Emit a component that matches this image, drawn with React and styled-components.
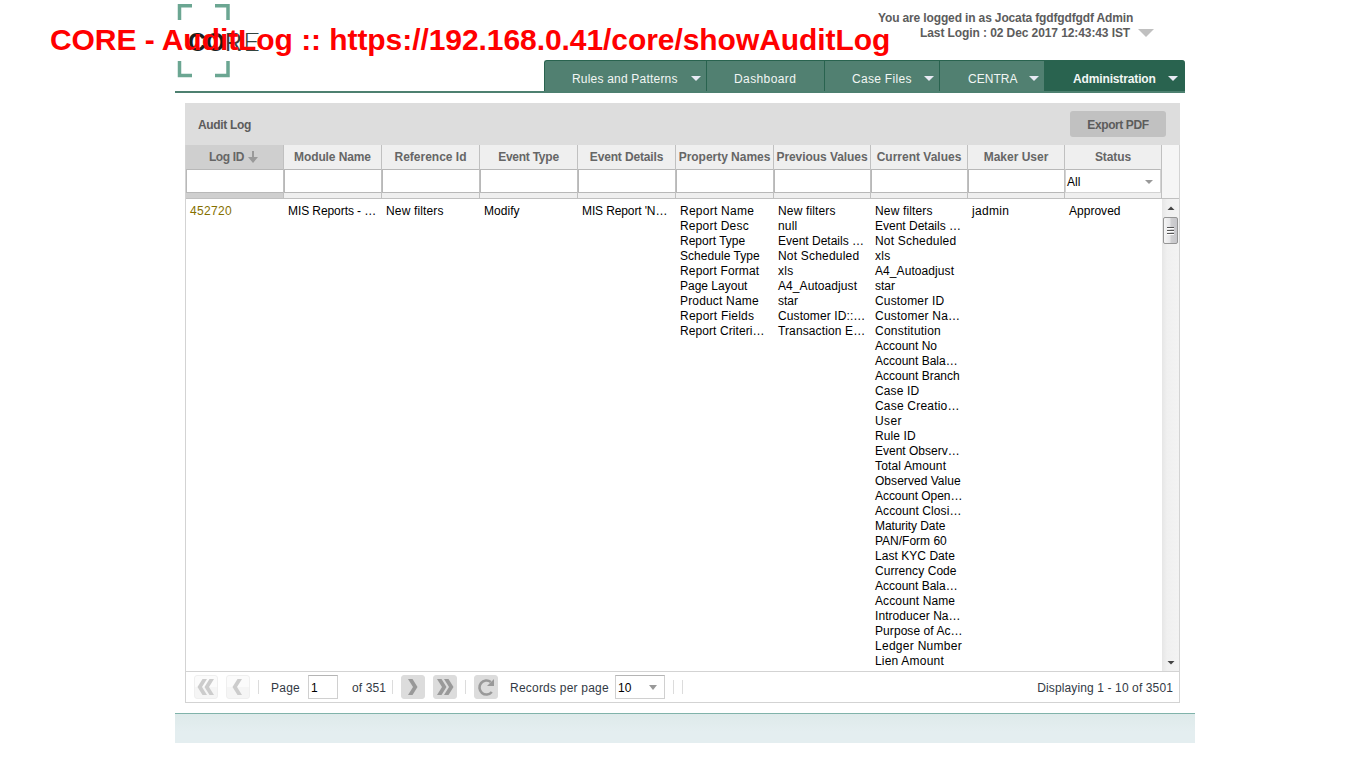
import React from "react";
import styled, { createGlobalStyle } from "styled-components";

const Global = createGlobalStyle`
  * { box-sizing: border-box; }
  html, body { margin: 0; padding: 0; background: #fff; overflow: hidden; }
  body { font: 12px/15px "Liberation Sans", Arial, sans-serif; color: #000; }
`;

const Page = styled.div`
  position: relative;
  width: 1349px;
  height: 758px;
  padding-left: 175px;
  overflow: hidden;
`;

const UrlCaption = styled.div`
  position: absolute;
  left: 50px;
  top: 22px;
  font-size: 30px;
  line-height: 35px;
  font-weight: bold;
  letter-spacing: -0.065px;
  color: #f00;
  white-space: nowrap;
`;

const Text = styled.span`
  letter-spacing: ${(p) => p.$ls || 0}px;
  white-space: pre;
`;

const Masthead = styled.header`
  display: flex;
  justify-content: space-between;
  width: 1010px;
  height: 60px;
`;

const Logo = styled.svg`
  display: block;
  width: 92px;
  height: 80px;
  flex: none;
  overflow: visible;
`;

const Login = styled.div`
  display: flex;
  flex-direction: column;
  width: 307px;
  padding-top: 11px;
  font-weight: bold;
  color: #5c5c5c;
`;

const LoginLine = styled.div`
  display: flex;
  align-items: center;
  height: 15px;
  padding-left: ${(p) => p.$indent || 0}px;
`;

const Caret = styled.i`
  width: 0;
  height: 0;
  border: ${(p) => p.$w || 5}px solid transparent;
  border-top: ${(p) => p.$h || 5}px solid ${(p) => p.$color || "#e8eaf4"};
  border-bottom: 0;
`;

const UserCaret = styled(Caret)`
  margin: 0 0 2px 8px;
`;

const NavBar = styled.nav`
  display: flex;
  justify-content: flex-end;
  width: 1010px;
  height: 33px;
  border-bottom: 2px solid #4d8070;
`;

const NavItem = styled.div`
  display: flex;
  align-items: center;
  justify-content: space-between;
  width: ${(p) => p.$w}px;
  height: 31px;
  padding: 7px ${(p) => p.$right || 5}px 0 ${(p) => p.$left}px;
  color: #f2f6f4;
  background: ${(p) => (p.$active ? "#29634f" : "#518071")};
  border-top: 1px solid #29634f;
  border-left: ${(p) => (p.$active ? 0 : "1px solid #29634f")};
  border-radius: ${(p) => p.$radius || 0};
  font-weight: ${(p) => (p.$active ? "bold" : "normal")};
`;

const NavCaret = styled(Caret)`
  margin-bottom: 2px;
`;

const Panel = styled.section`
  width: 995px;
  height: 600px;
  margin: 10px 0 0 10px;
  border: 1px solid #d3d3d3;
  border-top: 0;
`;

const PanelTitle = styled.div`
  display: flex;
  align-items: center;
  justify-content: space-between;
  height: 42px;
  margin: 0 -1px;
  padding: 0 14px 0 13px;
  background: #ddd;
  color: #5c5c5c;
  font-weight: bold;
`;

const TitleText = styled(Text)`
  padding-top: 2px;
`;

const ExportButton = styled.button`
  width: 96px;
  height: 26px;
  padding: 2px 0 0;
  border: 0;
  border-radius: 3px;
  background: #c1c1c1;
  color: #5c5c5c;
  font: bold 12px/15px "Liberation Sans", Arial, sans-serif;
`;

const HeaderRow = styled.div`
  display: flex;
  height: 54px;
  background: #f5f5f5;
  border-bottom: 1px solid #c0c0c0;
`;

const HeaderCell = styled.div`
  width: ${(p) => p.$w}px;
  background: ${(p) => (p.$sorted ? "#cfcfcf" : "#efefef")};
  border-right: 1px solid #c0c0c0;
`;

const HeaderLabel = styled.div`
  display: flex;
  align-items: center;
  justify-content: center;
  height: 24px;
  padding-right: ${(p) => (p.$sorted ? 2 : 0)}px;
  color: #666;
  font-weight: bold;
  white-space: nowrap;
`;

const SortArrow = styled.svg`
  width: 10px;
  height: 12px;
  margin-left: 4px;
`;

const FilterBox = styled.div`
  display: flex;
  align-items: center;
  justify-content: space-between;
  height: 24px;
  padding: 2px 7px 0 1px;
  background: #fff;
  border: 1px solid #b8b8b8;
  border-right: 0;
`;

const SelectBox = styled(FilterBox)`
  border-color: #b8b8b8 #d3d3d3 #d3d3d3;
  border-right: 1px solid #d3d3d3;
`;

const SelectCaret = styled(Caret)`
  margin-bottom: 1px;
`;

const Body = styled.div`
  display: flex;
  height: 472px;
`;

const BodyCell = styled.div`
  width: ${(p) => p.$w}px;
  padding: 5px 0 0 4px;
  color: ${(p) => p.$color || "#000"};
  overflow: hidden;
`;

const Line = styled.div`
  height: 15px;
  letter-spacing: ${(p) => p.$ls || 0}px;
  white-space: pre;
`;

const ScrollBar = styled.div`
  display: flex;
  flex-direction: column;
  align-items: center;
  width: 17px;
  height: 472px;
  background: linear-gradient(90deg, #e6e6e6, #f0f0f0 30%, #f3f3f3);
`;

const ScrollArrow = styled.svg`
  width: 17px;
  height: 18px;
  flex: none;
`;

const Thumb = styled.div`
  display: flex;
  flex-direction: column;
  align-items: center;
  justify-content: center;
  gap: 1px;
  width: 15px;
  height: 27px;
  border: 1px solid #959595;
  border-radius: 2px;
  background: linear-gradient(90deg, #f5f5f5, #e6e6e8 45%, #cfcfd1 55%, #c6c6ca);
`;

const Grip = styled.i`
  width: 7px;
  height: 2px;
  border-top: 1px solid #555;
  background: #fff;
`;

const Spacer = styled.div`
  flex: 1;
`;

const Toolbar = styled.div`
  display: flex;
  align-items: center;
  height: 31px;
  padding: 0 6px 0 8px;
  border-top: 1px solid #d3d3d3;
  color: #333a45;
`;

const PageButton = styled.div`
  display: flex;
  align-items: center;
  justify-content: center;
  width: 24px;
  height: 24px;
  margin-right: ${(p) => p.$gap}px;
  border-radius: 3px;
  border: 1px solid ${(p) => (p.$off ? "#efefef" : "#dcdcdc")};
  background: ${(p) => (p.$off ? "linear-gradient(#fbfbfb 50%, #f5f5f5 50%)" : "#dcdcdc")};
  svg { width: 24px; height: 24px; flex: none; }
`;

const Divider = styled.i`
  width: 1px;
  height: 14px;
  margin-right: ${(p) => p.$gap || 0}px;
  background: #dcdcdc;
`;

const Field = styled.div`
  display: flex;
  align-items: center;
  justify-content: space-between;
  width: ${(p) => p.$w}px;
  height: 24px;
  padding: 2px 7px 0 2px;
  margin-right: ${(p) => p.$gap || 0}px;
  border: 1px solid #d0d0d0;
  border-top-color: #b5b5b5;
  color: #000;
`;

const Slot = styled.div`
  width: ${(p) => (p.$w ? `${p.$w}px` : "auto")};
  padding-top: 2px;
  white-space: nowrap;
`;

const Footer = styled.footer`
  width: 1020px;
  height: 30px;
  margin-top: 10px;
  border-top: 1px solid #80b3aa;
  background: linear-gradient(#deeaea, #e4eef0 60%);
`;

const columns = [
  { name: "Log ID", w: 98, sorted: true, ls: -0.35, color: "#857000", lines: [["452720", 0.33]] },
  { name: "Module Name", w: 98, ls: -0.1, lines: [["MIS Reports - …", -0.08]] },
  { name: "Reference Id", w: 98, lines: [["New filters", 0.15]] },
  { name: "Event Type", w: 98, ls: -0.25, lines: [["Modify", 0.05]] },
  { name: "Event Details", w: 98, ls: -0.15, lines: [["MIS Report 'N…", -0.12]] },
  {
    name: "Property Names", w: 98, ls: -0.03,
    lines: [["Report Name", 0.25], ["Report Desc", 0.2], ["Report Type"], ["Schedule Type", 0.04], ["Report Format", 0.15],
      ["Page Layout"], ["Product Name", 0.17], ["Report Fields", 0.22], ["Report Criteri…", 0.08]],
  },
  {
    name: "Previous Values", w: 97, ls: -0.07,
    lines: [["New filters", 0.15], ["null", 0.2], ["Event Details …"], ["Not Scheduled", 0.2], ["xls", 0.3],
      ["A4_Autoadjust", 0.08], ["star"], ["Customer ID::…", 0.1], ["Transaction E…", 0.12]],
  },
  {
    name: "Current Values", w: 97,
    lines: [
      ["New filters", 0.15], ["Event Details …"], ["Not Scheduled", 0.2], ["xls", 0.3], ["A4_Autoadjust", 0.08], ["star"],
      ["Customer ID", 0.17], ["Customer Na…", 0.22], ["Constitution", 0.22], ["Account No"], ["Account Bala…"],
      ["Account Branch"], ["Case ID", 0.12], ["Case Creatio…", 0.2], ["User", 0.4], ["Rule ID", 0.12],
      ["Event Observ…"], ["Total Amount", 0.15], ["Observed Value", 0.04], ["Account Open…", -0.05], ["Account Closi…", 0.08],
      ["Maturity Date", -0.08], ["PAN/Form 60"], ["Last KYC Date", 0.04], ["Currency Code", 0.07], ["Account Bala…"],
      ["Account Name", 0.12], ["Introducer Na…", 0.07], ["Purpose of Ac…", 0.07], ["Ledger Number", 0.28], ["Lien Amount", 0.2],
    ],
  },
  { name: "Maker User", w: 97, lines: [["jadmin", 0.3]] },
  { name: "Status", w: 97, ls: -0.1, select: "All", lines: [["Approved", 0.02]] },
];

const ChevronLeft = ({ x, color }) => <path d={`M${x + 9} 4h-4.500l-5 8 5 8h4.500l-5-8z`} fill={color} />;
const ChevronRight = ({ x, color }) => <path d={`M${x} 4h4.500l5 8-5 8h-4.500l5-8z`} fill={color} />;

export default function App() {
  return (
    <>
      <Global />
      <Page>
        <Masthead>
          <Logo viewBox="0 0 92 80">
            <g fill="none" stroke="#6ba692" strokeWidth="3.500">
              <path d="M17 5.700H4.500V20M40 5.700h13V20M4.500 61v14.500H17M53 61v14.500H40" />
            </g>
            <g fontFamily="Liberation Sans, Arial, sans-serif" fontSize="26">
              <text x="13" y="51" fontWeight="bold" fill="#17211e" textLength="37" lengthAdjust="spacingAndGlyphs">CO</text>
              <text x="50" y="51" fill="#33443f" textLength="17" lengthAdjust="spacingAndGlyphs">R</text>
              <text x="68" y="51" fontFamily="Lato" fontWeight="300" fill="#33443f" textLength="17" lengthAdjust="spacingAndGlyphs">E</text>
            </g>
          </Logo>
          <Login>
            <LoginLine><Text $ls={-0.14}>You are logged in as Jocata fgdfgdfgdf Admin</Text></LoginLine>
            <LoginLine $indent={42}>
              <Text $ls={-0.09}>Last Login : 02 Dec 2017 12:43:43 IST</Text>
              <UserCaret $w={8} $h={8} $color="#c0c0c0" />
            </LoginLine>
          </Login>
        </Masthead>
        <NavBar>
          <NavItem $w={162} $left={27} $radius="3px 0 0 0"><Text $ls={0.2}>Rules and Patterns</Text><NavCaret /></NavItem>
          <NavItem $w={118} $left={27}><Text $ls={0.4}>Dashboard</Text></NavItem>
          <NavItem $w={115} $left={27}><Text $ls={0.3}>Case Files</Text><NavCaret /></NavItem>
          <NavItem $w={105} $left={28}><Text $ls={0.05}>CENTRA</Text><NavCaret /></NavItem>
          <NavItem $w={141} $left={29} $right={7} $active $radius="0 3px 0 0"><Text $ls={-0.14}>Administration</Text><NavCaret /></NavItem>
        </NavBar>
        <Panel>
          <PanelTitle>
            <TitleText $ls={-0.33}>Audit Log</TitleText>
            <ExportButton><Text $ls={-0.4}>Export PDF</Text></ExportButton>
          </PanelTitle>
          <HeaderRow>
            {columns.map((c) => (
              <HeaderCell key={c.name} $w={c.w} $sorted={c.sorted}>
                <HeaderLabel $sorted={c.sorted}>
                  <Text $ls={c.ls}>{c.name}</Text>
                  {c.sorted && (
                    <SortArrow viewBox="0 0 10 12">
                      <path d="M4 0h2v6h4L5 12 0 6h4z" fill="#999" />
                    </SortArrow>
                  )}
                </HeaderLabel>
                {c.select ? (
                  <SelectBox><Text>{c.select}</Text><SelectCaret $w={4.5} $h={4} $color="#999" /></SelectBox>
                ) : (
                  <FilterBox />
                )}
              </HeaderCell>
            ))}
          </HeaderRow>
          <Body>
            {columns.map((c) => (
              <BodyCell key={c.name} $w={c.w} $color={c.color}>
                {c.lines.map(([text, ls], i) => <Line key={i} $ls={ls}>{text}</Line>)}
              </BodyCell>
            ))}
            <ScrollBar>
              <ScrollArrow viewBox="0 0 17 18"><path d="M9 7.500 12.500 11h-7z" fill="#444" /></ScrollArrow>
              <Thumb><Grip /><Grip /><Grip /></Thumb>
              <Spacer />
              <ScrollArrow viewBox="0 0 17 18"><path d="M5.500 8h7L9 11.500z" fill="#444" /></ScrollArrow>
            </ScrollBar>
          </Body>
          <Toolbar>
            <PageButton $off $gap={8}>
              <svg viewBox="0 0 24 24"><ChevronLeft x={4} color="#ccc" /><ChevronLeft x={11} color="#ccc" /></svg>
            </PageButton>
            <PageButton $off $gap={8}>
              <svg viewBox="0 0 24 24"><ChevronLeft x={7} color="#ccc" /></svg>
            </PageButton>
            <Divider $gap={12} />
            <Slot $w={37}><Text $ls={0.25}>Page</Text></Slot>
            <Field $w={30} $gap={14}><Text>1</Text></Field>
            <Slot $w={40}><Text $ls={0.1}>of 351</Text></Slot>
            <Divider $gap={8} />
            <PageButton $gap={8}>
              <svg viewBox="0 0 24 24"><ChevronRight x={7} color="#999" /></svg>
            </PageButton>
            <PageButton $gap={8}>
              <svg viewBox="0 0 24 24"><ChevronRight x={4} color="#999" /><ChevronRight x={11} color="#999" /></svg>
            </PageButton>
            <Divider $gap={8} />
            <PageButton $gap={12}>
              <svg viewBox="0 0 24 24">
                <path d="M17.800 17A7 7 0 1 1 16.800 7" fill="none" stroke="#999" strokeWidth="2.600" />
                <path d="M20 4v7h-7z" fill="#999" />
              </svg>
            </PageButton>
            <Slot $w={105}><Text $ls={0.22}>Records per page</Text></Slot>
            <Field $w={50} $gap={8}><Text $ls={0.1}>10</Text><SelectCaret $w={4.5} $h={5} $color="#999" /></Field>
            <Divider $gap={8} />
            <Divider />
            <Spacer />
            <Slot><Text $ls={0.12}>Displaying 1 - 10 of 3501</Text></Slot>
          </Toolbar>
        </Panel>
        <Footer />
        <UrlCaption>CORE - AuditLog :: https://192.168.0.41/core/showAuditLog</UrlCaption>
      </Page>
    </>
  );
}
